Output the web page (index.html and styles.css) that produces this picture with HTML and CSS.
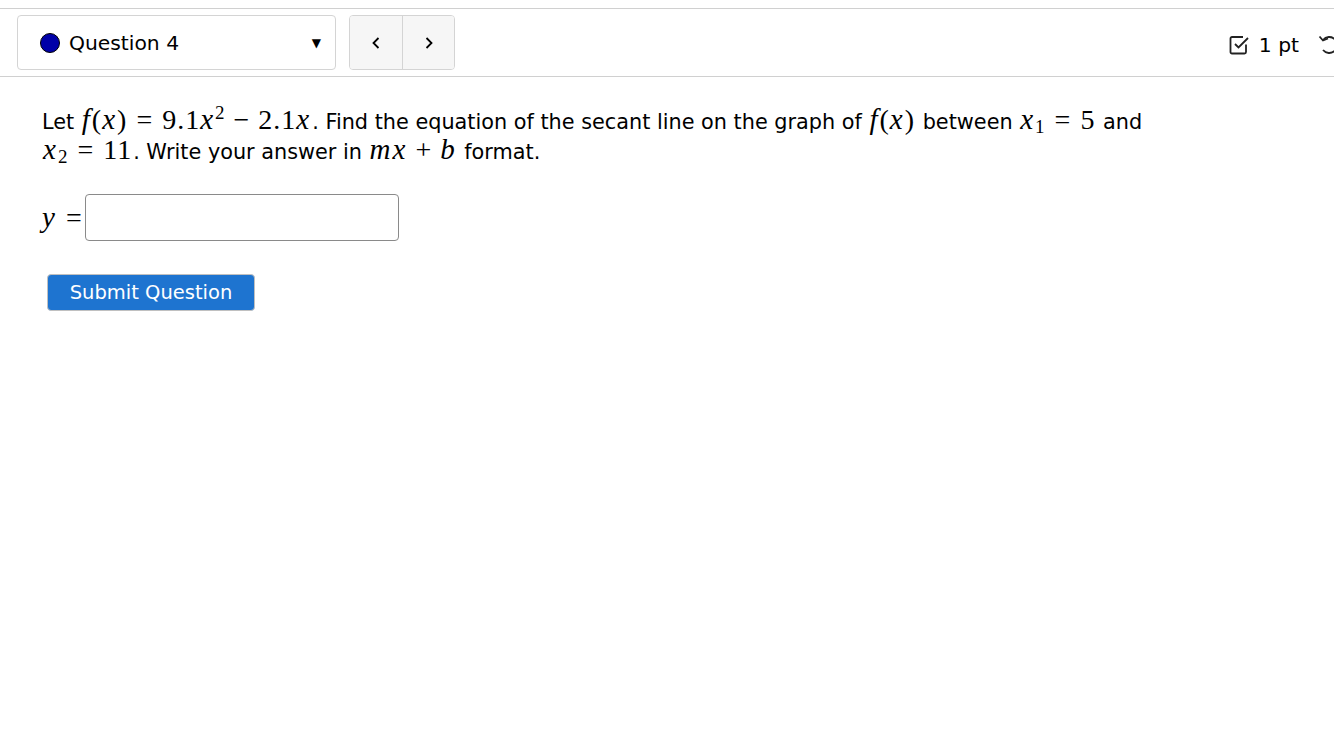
FILE: index.html
```html
<!DOCTYPE html>
<html lang="en">
  <head>
    <meta charset="UTF-8" />
    <title>Question 4</title>
    <link rel="stylesheet" href="styles.css">
  </head>
  <body>
    <div class="header">
      <div class="picker">
        <span class="dot"></span>
        <span class="qname">Question 4</span>
        <span class="caret">&#9660;</span>
      </div>
      <div class="navs">
        <button class="nav">
          <svg width="10" height="16" viewBox="0 0 10 16"><path d="M7.5 3 L2.5 8 L7.5 13" fill="none" stroke="#000" stroke-width="1.8"/></svg>
        </button>
        <button class="nav">
          <svg width="10" height="16" viewBox="0 0 10 16"><path d="M2.5 3 L7.5 8 L2.5 13" fill="none" stroke="#000" stroke-width="1.8"/></svg>
        </button>
      </div>
      <div class="points">
        <svg class="check" width="21" height="21" viewBox="0 0 21 21"><path d="M17 10.5 V18 a1.5 1.5 0 0 1 -1.5 1.5 H3 a1.5 1.5 0 0 1 -1.5 -1.5 V4.5 A1.5 1.5 0 0 1 3 3 H14" fill="none" stroke="#222" stroke-width="1.8"/><path d="M6 10 L9.5 13.5 L19 4" fill="none" stroke="#222" stroke-width="1.8"/></svg>
        <span class="pt">1 pt</span>
        <svg class="undo" width="20" height="22" viewBox="0 0 20 22"><path d="M5 6 A8 8 0 1 1 5 16" fill="none" stroke="#222" stroke-width="1.8"/><path d="M1.5 2.5 L5 6.5 L10 4.5" fill="none" stroke="#222" stroke-width="1.8"/></svg>
      </div>
    </div>
    <div class="question">
      <p class="text">
        Let <span class="m"><i>f</i>(<i>x</i>)<span class="rel">=</span>9.1<i>x</i><sup>2</sup><span class="bin">&minus;</span>2.1<i>x</i></span>. Find the equation of the secant line on the graph of <span class="m"><i>f</i>(<i>x</i>)</span> between <span class="m"><i>x</i><sub>1</sub><span class="rel">=</span>5</span> and<br>
        <span class="m"><i>x</i><sub>2</sub><span class="rel">=</span>11</span>. Write your answer in <span class="m"><i>m</i><i>x</i><span class="bin">+</span><i>b</i></span> format.
      </p>
      <div class="answer">
        <span class="m"><i>y</i><span class="rel">=</span></span><input class="box" type="text" />
      </div>
      <button class="submit">Submit Question</button>
    </div>
  </body>
</html>
```

FILE: styles.css
```css
body {
  margin: 0;
  padding-top: 8px;
  font-family: "DejaVu Sans", Verdana, sans-serif;
  color: #000;
  background: #fff;
}
.header {
  display: flex;
  align-items: center;
  border-top: 1px solid #d0d0d0;
  border-bottom: 1px solid #d0d0d0;
  padding: 6px 0 6px 17px;
  height: 55px;
}
.picker {
  box-sizing: border-box;
  width: 319px;
  height: 55px;
  border: 1px solid #d4d4d4;
  border-radius: 4px;
  display: flex;
  align-items: center;
  padding-left: 22px;
}
.dot {
  width: 18px;
  height: 18px;
  border-radius: 50%;
  background: #0000a8;
  border: 1.5px solid #000;
}
.qname {
  font-size: 20.3px;
  margin-left: 9px;
  flex-grow: 1;
}
.caret {
  font-size: 12px;
  margin-right: 14px;
}
.navs {
  display: flex;
  margin-left: 13px;
  height: 55px;
  border: 1px solid #d4d4d4;
  border-radius: 4px;
  overflow: hidden;
  box-sizing: border-box;
}
.nav {
  width: 52px;
  border: none;
  background: #f6f6f6;
  display: flex;
  align-items: center;
  justify-content: center;
  padding: 0;
}
.nav + .nav {
  border-left: 1px solid #d4d4d4;
}
.points {
  margin-left: auto;
  display: flex;
  align-items: center;
  margin-right: -4px;
  padding-top: 4px;
}
.pt {
  font-size: 20.3px;
  margin: 0 19px 0 9px;
}
.question {
  padding: 0 42px;
}
.text {
  font-size: 20.8px;
  line-height: 30px;
  margin: 30px 0 0;
}
.m {
  font-family: "Liberation Serif", "Times New Roman", serif;
  font-size: 28px;
  line-height: 0;
  white-space: nowrap;
  letter-spacing: 1px;
  padding: 0 1px;
}
.m i {
  font-size: 29px;
  padding-right: 1px;
}
.rel {
  margin: 0 9px;
}
.bin {
  margin: 0 8px;
}
sup, sub {
  font-size: 19px;
  line-height: 0;
}
sup {
  vertical-align: 10px;
}
sub {
  font-style: normal;
  vertical-align: -4px;
}
.answer {
  display: flex;
  align-items: center;
  margin-top: 27px;
}
.answer .m {
  line-height: 1;
  padding: 0;
}
.answer .rel {
  margin-right: 2px;
}
.box {
  width: 314px;
  height: 47px;
  box-sizing: border-box;
  border: 1px solid #8a8a8a;
  border-radius: 4px;
}
.submit {
  margin: 33px 0 0 5px;
  width: 208px;
  height: 37px;
  background: #1e74d0;
  color: #fff;
  border: 1px solid #c0c0c0;
  border-radius: 4px;
  font-family: "DejaVu Sans", Verdana, sans-serif;
  font-size: 19.5px;
  padding: 0;
}
```
